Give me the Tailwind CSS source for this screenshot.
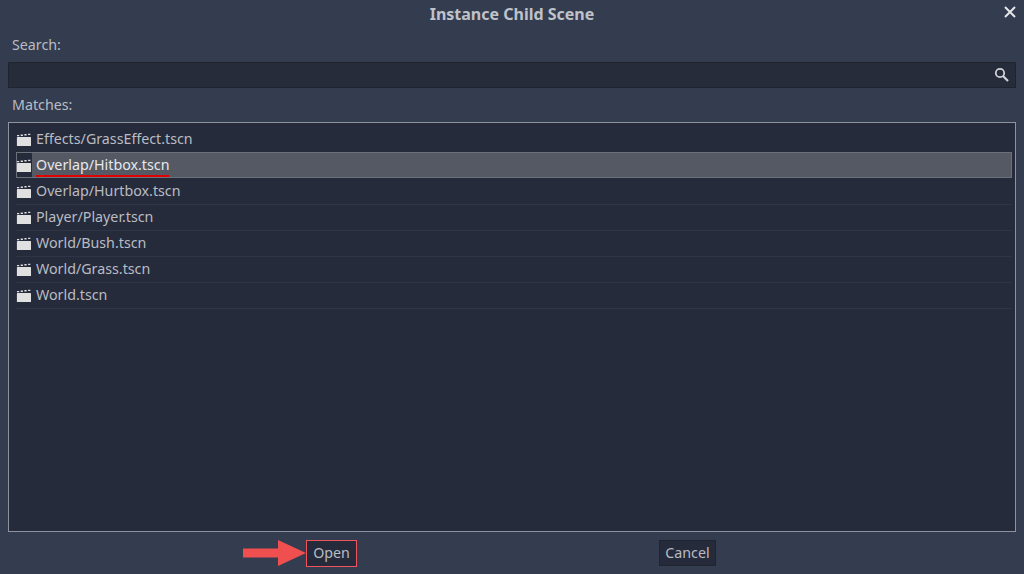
<!DOCTYPE html>
<html lang="en">
<head>
  <meta charset="UTF-8">
  <title>Instance Child Scene</title>
  <script src="https://cdn.jsdelivr.net/npm/@tailwindcss/browser@4"></script>
</head>
<body class="w-[1024px] h-[574px] overflow-hidden bg-[#343c50] font-['Noto_Sans',sans-serif] text-[14.25px] text-[#b9bcc3]">
  <div class="flex flex-col h-full">
    <!-- title -->
    <div class="relative h-[27px] flex items-center justify-center">
      <span class="font-bold text-[16px] text-[#bfc2c8]">Instance Child Scene</span>
      <svg class="absolute left-[1003px] top-[5px]" width="14" height="14" viewBox="0 0 14 14"><path d="M2 2 12 12M12 2 2 12" stroke="#e4e6e9" stroke-width="2"/></svg>
    </div>

    <div class="flex-1 flex flex-col px-2">
      <div class="h-[35px] pl-[4px] flex items-center">Search:</div>
      <div class="relative h-[26px] bg-[#272c3b] border border-[#20242f]">
        <svg class="absolute right-[6px] top-[4px]" width="15" height="15" viewBox="0 0 15 15"><circle cx="6" cy="6" r="4.2" fill="none" stroke="#d0d2d6" stroke-width="1.8"/><path d="M9 9 14 14" stroke="#d0d2d6" stroke-width="2.2"/></svg>
      </div>
      <div class="h-[34px] pl-[4px] flex items-center pb-[1px]">Matches:</div>

      <!-- list -->
      <div class="h-[410px] bg-[#262b3b] border border-[#8f939d] pt-[3px] pl-[7px] pr-[3px]">
        <div class="flex items-center h-[26px] pb-[1px]">
          <svg class="shrink-0" width="16" height="16" viewBox="0 0 16 16"><path d="M1.500 6h12.900a.6.6 0 0 1 .6.6V15H.9V6.600A.6.6 0 0 1 1.500 6ZM1 3.900h2.200v1.400H1zM4.700 3.500h2.200v1.400H4.700zM8.400 3.100h2.200v1.400H8.400zM12.100 2.700h2.200v1.400h-2.200z" fill="#e0e0e0"/></svg>
          <span class="ml-[4px]">Effects/GrassEffect.tscn</span>
        </div>
        <div class="flex items-center h-[26px] bg-[#555964] border border-[#6c707b]">
          <div class="flex items-center h-full w-[15px] shrink-0 bg-[#262b3b]">
            <svg class="shrink-0 -ml-[1px]" width="16" height="16" viewBox="0 0 16 16"><path d="M1.500 6h12.900a.6.6 0 0 1 .6.6V15H.9V6.600A.6.6 0 0 1 1.500 6ZM1 3.900h2.200v1.400H1zM4.700 3.500h2.200v1.400H4.700zM8.400 3.100h2.200v1.400H8.400zM12.100 2.700h2.200v1.400h-2.200z" fill="#e0e0e0"/></svg>
          </div>
          <span class="relative ml-[4px] text-[#e6e8eb]">Overlap/Hitbox.tscn
            <span class="absolute left-0 right-0 top-[21px] h-[2px] bg-[#e00000]"></span>
          </span>
        </div>
        <div class="flex items-center h-[26px] pb-[1px]">
          <svg class="shrink-0" width="16" height="16" viewBox="0 0 16 16"><path d="M1.500 6h12.900a.6.6 0 0 1 .6.6V15H.9V6.600A.6.6 0 0 1 1.500 6ZM1 3.900h2.200v1.400H1zM4.700 3.500h2.200v1.400H4.700zM8.400 3.100h2.200v1.400H8.400zM12.100 2.700h2.200v1.400h-2.200z" fill="#e0e0e0"/></svg>
          <span class="ml-[4px]">Overlap/Hurtbox.tscn</span>
        </div>
        <div class="flex items-center h-[26px] border-t border-[#2f3546] pb-[2px]">
          <svg class="shrink-0" width="16" height="16" viewBox="0 0 16 16"><path d="M1.500 6h12.900a.6.6 0 0 1 .6.6V15H.9V6.600A.6.6 0 0 1 1.500 6ZM1 3.900h2.200v1.400H1zM4.700 3.500h2.200v1.400H4.700zM8.400 3.100h2.200v1.400H8.400zM12.100 2.700h2.200v1.400h-2.200z" fill="#e0e0e0"/></svg>
          <span class="ml-[4px]">Player/Player.tscn</span>
        </div>
        <div class="flex items-center h-[26px] border-t border-[#2f3546] pb-[2px]">
          <svg class="shrink-0" width="16" height="16" viewBox="0 0 16 16"><path d="M1.500 6h12.900a.6.6 0 0 1 .6.6V15H.9V6.600A.6.6 0 0 1 1.500 6ZM1 3.900h2.200v1.400H1zM4.700 3.500h2.200v1.400H4.700zM8.400 3.100h2.200v1.400H8.400zM12.100 2.700h2.200v1.400h-2.200z" fill="#e0e0e0"/></svg>
          <span class="ml-[4px]">World/Bush.tscn</span>
        </div>
        <div class="flex items-center h-[26px] border-t border-[#2f3546] pb-[2px]">
          <svg class="shrink-0" width="16" height="16" viewBox="0 0 16 16"><path d="M1.500 6h12.900a.6.6 0 0 1 .6.6V15H.9V6.600A.6.6 0 0 1 1.500 6ZM1 3.900h2.200v1.400H1zM4.700 3.500h2.200v1.400H4.700zM8.400 3.100h2.200v1.400H8.400zM12.100 2.700h2.200v1.400h-2.200z" fill="#e0e0e0"/></svg>
          <span class="ml-[4px]">World/Grass.tscn</span>
        </div>
        <div class="flex items-center h-[26px] border-t border-b-0 border-[#2f3546] pb-[2px]">
          <svg class="shrink-0" width="16" height="16" viewBox="0 0 16 16"><path d="M1.500 6h12.900a.6.6 0 0 1 .6.6V15H.9V6.600A.6.6 0 0 1 1.500 6ZM1 3.900h2.200v1.400H1zM4.700 3.500h2.200v1.400H4.700zM8.400 3.100h2.200v1.400H8.400zM12.100 2.700h2.200v1.400h-2.200z" fill="#e0e0e0"/></svg>
          <span class="ml-[4px]">World.tscn</span>
        </div>
        <div class="border-t border-[#2f3546]"></div>
      </div>

      <!-- buttons -->
      <div class="relative h-[42px] flex items-center">
        <svg class="absolute left-[235px] top-[8px]" width="64" height="26" viewBox="0 0 64 26"><path d="M0 8.500H35V0L63 13 35 26V17.500H0Z" fill="#ef4f4f"/></svg>
        <div class="ml-[298px] w-[51px] h-[27px] flex items-center justify-center pb-[1px] bg-[#262b3b] border border-[#f2545b]">Open</div>
        <div class="ml-[302px] w-[57px] h-[26px] flex items-center justify-center pb-[1px] bg-[#262b3b] border border-[#20242f]">Cancel</div>
      </div>
    </div>
  </div>
</body>
</html>
